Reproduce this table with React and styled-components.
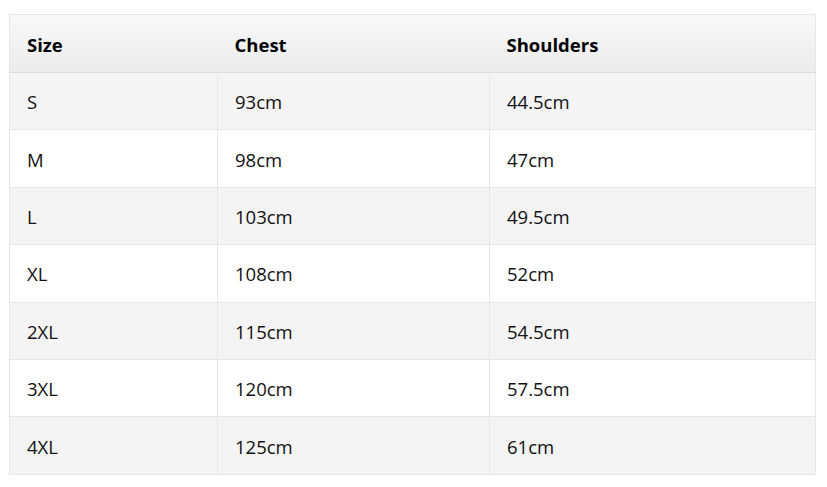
import React from "react";
import styled, { createGlobalStyle } from "styled-components";

const Global = createGlobalStyle`
  html, body { margin: 0; padding: 0; background: #ffffff; }
  body { font-family: "Open Sans", "Noto Sans", sans-serif; color: #111; }
`;

const Wrap = styled.div`
  padding: 14px 12px 0 9px;
`;

const Table = styled.table`
  width: 806px;
  border-collapse: collapse;
  border: 1px solid #e6e6e6;
  table-layout: fixed;
  font-size: 18.5px;
`;

const HeadRow = styled.tr`
  background: linear-gradient(to bottom, #f8f8f8, #ececec);
  border-bottom: 1px solid #dcdcdc;
`;

const Th = styled.th`
  height: 55px;
  padding: 2px 17px 0;
  text-align: left;
  font-weight: 700;
  font-size: 18.5px;
  color: #000;
`;

const Row = styled.tr`
  background: ${(p) => (p.$odd ? "#f4f4f4" : "#ffffff")};
  border-top: 1px solid #e6e6e6;
`;

const Td = styled.td`
  height: 55.4px;
  padding: 1px 17px 0;
  border-left: 1px solid #e6e6e6;
  color: #111;
  &:first-child { border-left: none; }
`;

const rows = [
  ["S", "93cm", "44.5cm"],
  ["M", "98cm", "47cm"],
  ["L", "103cm", "49.5cm"],
  ["XL", "108cm", "52cm"],
  ["2XL", "115cm", "54.5cm"],
  ["3XL", "120cm", "57.5cm"],
  ["4XL", "125cm", "61cm"],
];

export default function App() {
  return (
    <Wrap>
      <Global />
      <Table>
        <colgroup>
          <col style={{ width: 208 }} />
          <col style={{ width: 272 }} />
          <col style={{ width: 326 }} />
        </colgroup>
        <thead>
          <HeadRow>
            <Th>Size</Th>
            <Th>Chest</Th>
            <Th>Shoulders</Th>
          </HeadRow>
        </thead>
        <tbody>
          {rows.map((r, i) => (
            <Row key={r[0]} $odd={i % 2 === 0}>
              {r.map((c, j) => (
                <Td key={j}>{c}</Td>
              ))}
            </Row>
          ))}
        </tbody>
      </Table>
    </Wrap>
  );
}
